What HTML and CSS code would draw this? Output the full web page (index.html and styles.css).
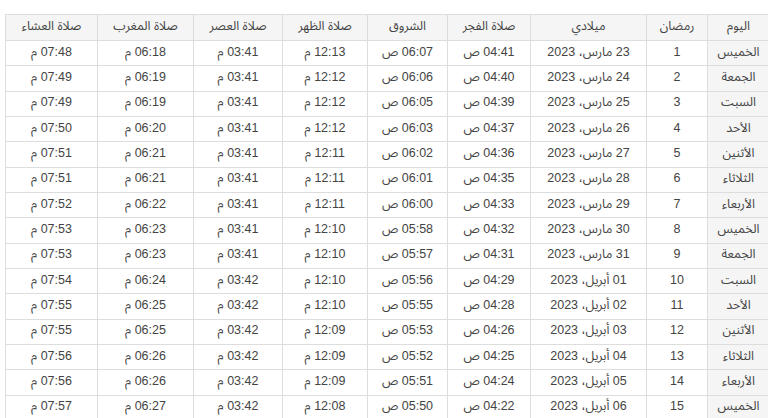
FILE: index.html
```html
<!DOCTYPE html>
<html lang="ar">
<head>
<meta charset="utf-8">
<title>مواقيت الصلاة</title>
<link rel="stylesheet" href="styles.css">
</head>
<body>
<div class="wrap">
<table class="times" dir="rtl">
<colgroup>
<col class="c-day"><col class="c-ram"><col class="c-date"><col class="c-fajr"><col class="c-sun"><col class="c-dhuhr"><col class="c-asr"><col class="c-magh"><col class="c-isha">
</colgroup>
<thead>
<tr><th>اليوم</th><th>رمضان</th><th>ميلادي</th><th>صلاة الفجر</th><th>الشروق</th><th>صلاة الظهر</th><th>صلاة العصر</th><th>صلاة المغرب</th><th>صلاة العشاء</th></tr>
</thead>
<tbody>
<tr><th>الخميس</th><td>1</td><td>23 مارس، 2023</td><td>04:41 ص</td><td>06:07 ص</td><td>12:13 م</td><td>03:41 م</td><td>06:18 م</td><td>07:48 م</td></tr>
<tr><th>الجمعة</th><td>2</td><td>24 مارس، 2023</td><td>04:40 ص</td><td>06:06 ص</td><td>12:12 م</td><td>03:41 م</td><td>06:19 م</td><td>07:49 م</td></tr>
<tr><th>السبت</th><td>3</td><td>25 مارس، 2023</td><td>04:39 ص</td><td>06:05 ص</td><td>12:12 م</td><td>03:41 م</td><td>06:19 م</td><td>07:49 م</td></tr>
<tr><th>الأحد</th><td>4</td><td>26 مارس، 2023</td><td>04:37 ص</td><td>06:03 ص</td><td>12:12 م</td><td>03:41 م</td><td>06:20 م</td><td>07:50 م</td></tr>
<tr><th>الأثنين</th><td>5</td><td>27 مارس، 2023</td><td>04:36 ص</td><td>06:02 ص</td><td>12:11 م</td><td>03:41 م</td><td>06:21 م</td><td>07:51 م</td></tr>
<tr><th>الثلاثاء</th><td>6</td><td>28 مارس، 2023</td><td>04:35 ص</td><td>06:01 ص</td><td>12:11 م</td><td>03:41 م</td><td>06:21 م</td><td>07:51 م</td></tr>
<tr><th>الأربعاء</th><td>7</td><td>29 مارس، 2023</td><td>04:33 ص</td><td>06:00 ص</td><td>12:11 م</td><td>03:41 م</td><td>06:22 م</td><td>07:52 م</td></tr>
<tr><th>الخميس</th><td>8</td><td>30 مارس، 2023</td><td>04:32 ص</td><td>05:58 ص</td><td>12:10 م</td><td>03:41 م</td><td>06:23 م</td><td>07:53 م</td></tr>
<tr><th>الجمعة</th><td>9</td><td>31 مارس، 2023</td><td>04:31 ص</td><td>05:57 ص</td><td>12:10 م</td><td>03:41 م</td><td>06:23 م</td><td>07:53 م</td></tr>
<tr><th>السبت</th><td>10</td><td>01 أبريل، 2023</td><td>04:29 ص</td><td>05:56 ص</td><td>12:10 م</td><td>03:42 م</td><td>06:24 م</td><td>07:54 م</td></tr>
<tr><th>الأحد</th><td>11</td><td>02 أبريل، 2023</td><td>04:28 ص</td><td>05:55 ص</td><td>12:10 م</td><td>03:42 م</td><td>06:25 م</td><td>07:55 م</td></tr>
<tr><th>الأثنين</th><td>12</td><td>03 أبريل، 2023</td><td>04:26 ص</td><td>05:53 ص</td><td>12:09 م</td><td>03:42 م</td><td>06:25 م</td><td>07:55 م</td></tr>
<tr><th>الثلاثاء</th><td>13</td><td>04 أبريل، 2023</td><td>04:25 ص</td><td>05:52 ص</td><td>12:09 م</td><td>03:42 م</td><td>06:26 م</td><td>07:56 م</td></tr>
<tr><th>الأربعاء</th><td>14</td><td>05 أبريل، 2023</td><td>04:24 ص</td><td>05:51 ص</td><td>12:09 م</td><td>03:42 م</td><td>06:26 م</td><td>07:56 م</td></tr>
<tr><th>الخميس</th><td>15</td><td>06 أبريل، 2023</td><td>04:22 ص</td><td>05:50 ص</td><td>12:08 م</td><td>03:42 م</td><td>06:27 م</td><td>07:57 م</td></tr>
</tbody>
</table>
</div>
</body>
</html>
```
FILE: styles.css
```css
html, body {
  margin: 0;
  padding: 0;
  background: #fff;
  overflow: hidden;
}
.wrap {
  padding: 14px 0 0 5px;
}
.times {
  border-collapse: collapse;
  table-layout: fixed;
  width: 764px;
  font-family: "Liberation Sans", "Noto Sans Arabic", "Noto Naskh Arabic", "Noto Sans", "DejaVu Sans", sans-serif;
  font-size: 12.5px;
  line-height: 16px;
  color: #444;
}
.c-day { width: 62px; }
.c-ram { width: 61px; }
.c-date { width: 116px; }
.c-fajr { width: 83px; }
.c-sun { width: 80px; }
.c-dhuhr { width: 85px; }
.c-asr { width: 89px; }
.c-magh { width: 96px; }
.c-isha { width: 92px; }
.times th, .times td {
  border: 1px solid #dddddd;
  text-align: center;
  font-weight: normal;
  padding: 0 0 3px 0;
  white-space: nowrap;
}
.times thead th {
  background: #f5f5f5;
  height: 22px;
}
.times tbody tr {
  height: 25.33px;
}
.times tbody th {
  background: #f5f5f5;
}
```
